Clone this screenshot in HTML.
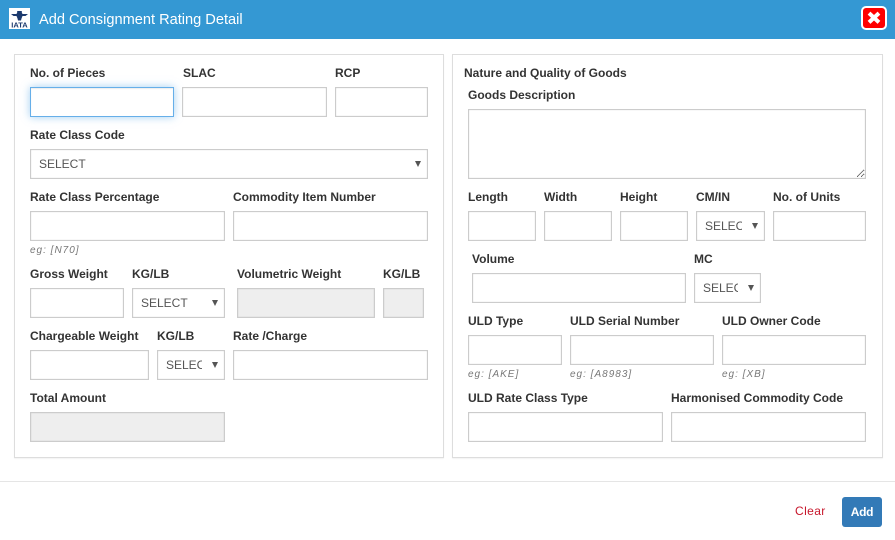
<!DOCTYPE html>
<html><head><meta charset="utf-8"><style>
*{box-sizing:border-box}
html,body{margin:0;padding:0;width:895px;height:540px;overflow:hidden;background:#fff;font-family:"Liberation Sans",sans-serif;font-size:12px;color:#333}
.hd{position:absolute;left:0;top:0;width:895px;height:39px;background:#3498d3}
.title{position:absolute;left:39px;top:10px;font-size:14.6px;line-height:19px;color:#fff;padding-top:1px}
.logo{position:absolute;left:9px;top:8px;width:21px;height:21px;background:#fff}
.x{position:absolute;left:861px;top:6px;width:26px;height:24px;background:#f00;border:2px solid #fff;border-radius:5px}
.panel{position:absolute;top:54px;height:404px;border:1px solid #ddd;background:#fff;box-shadow:0 1px 1px rgba(0,0,0,.05)}
label{position:absolute;font-weight:bold;font-size:12px;line-height:17px;color:#333;white-space:nowrap;margin-top:1px}
input,select,textarea{position:absolute;height:30px;margin:0;border:1px solid #ccc;background:#fff;box-shadow:inset 0 0 1px rgba(0,0,0,.2);font:12px "Liberation Sans",sans-serif;color:#555;padding:6px 8px;border-radius:0;outline:0}
select{appearance:none;-webkit-appearance:none;padding:4px 22px 4px 8px}
b{position:absolute;width:0;height:0;border-left:3.5px solid transparent;border-right:3.5px solid transparent;border-top:6px solid #555}
.dis{background:#eee}
.foc{border-color:#66afe9;box-shadow:inset 0 1px 1px rgba(0,0,0,.075),0 0 8px rgba(102,175,233,.6)}
i{position:absolute;font-size:10px;line-height:14px;color:#777;letter-spacing:1px;white-space:nowrap;margin-top:1px}
.line{position:absolute;left:0;top:481px;width:895px;height:1px;background:#e5e5e5}
.clear{position:absolute;left:795px;top:503px;line-height:17px;color:#c7162b;font-size:12px;letter-spacing:.4px}
.add{position:absolute;left:842px;top:497px;width:40px;height:30px;background:#337ab7;border-radius:3px;color:#fff;font-weight:bold;text-align:center;line-height:30px;font-size:12px;letter-spacing:-.3px}
</style></head><body>
<div class="hd"></div>
<div class="logo"><svg width="21" height="21" viewBox="0 0 21 21"><path d="M2 6h5.500l.7-1.500V3h4.600v1.500l.7 1.500H19l-2.500 2h-3l-1 2.500-.5 2H9l-.5-2-1-2.500h-3z" fill="#1c3a6e"/><text x="10.500" y="19.500" font-family="Liberation Sans" font-size="7.500" font-weight="bold" text-anchor="middle" fill="#1c3a6e">IATA</text></svg></div>
<div class="title">Add Consignment Rating Detail</div>
<div class="x"><svg width="22" height="20" viewBox="0 0 22 20" style="display:block"><path d="M7.500 6.500l7 6.500M14.500 6.500l-7 6.500" stroke="#fff" stroke-width="4" stroke-linecap="square"/></svg></div>

<div class="panel" style="left:14px;width:430px"></div>
<div class="panel" style="left:452px;width:431px"></div>

<label style="left:30px;top:64px">No. of Pieces</label>
<label style="left:183px;top:64px">SLAC</label>
<label style="left:335px;top:64px">RCP</label>
<input class="foc" style="left:30px;top:87px;width:144px">
<input style="left:182px;top:87px;width:145px">
<input style="left:335px;top:87px;width:93px">

<label style="left:30px;top:126px">Rate Class Code</label>
<select style="left:30px;top:149px;width:398px"><option>SELECT</option></select><b style="left:415px;top:161px"></b>

<label style="left:30px;top:188px">Rate Class Percentage</label>
<label style="left:233px;top:188px">Commodity Item Number</label>
<input style="left:30px;top:211px;width:195px">
<input style="left:233px;top:211px;width:195px">
<i style="left:30px;top:243px">eg: [N70]</i>

<label style="left:30px;top:265px">Gross Weight</label>
<label style="left:132px;top:265px">KG/LB</label>
<label style="left:237px;top:265px">Volumetric Weight</label>
<label style="left:383px;top:265px">KG/LB</label>
<input style="left:30px;top:288px;width:94px">
<select style="left:132px;top:288px;width:93px"><option>SELECT</option></select><b style="left:212px;top:300px"></b>
<input class="dis" style="left:237px;top:288px;width:138px">
<input class="dis" style="left:383px;top:288px;width:41px">

<label style="left:30px;top:327px">Chargeable Weight</label>
<label style="left:157px;top:327px">KG/LB</label>
<label style="left:233px;top:327px">Rate /Charge</label>
<input style="left:30px;top:350px;width:119px">
<select style="left:157px;top:350px;width:68px"><option>SELECT</option></select><b style="left:212px;top:362px"></b>
<input style="left:233px;top:350px;width:195px">

<label style="left:30px;top:389px">Total Amount</label>
<input class="dis" style="left:30px;top:412px;width:195px">

<label style="left:464px;top:64px">Nature and Quality of Goods</label>
<label style="left:468px;top:86px">Goods Description</label>
<textarea style="left:468px;top:109px;width:398px;height:70px"></textarea>

<label style="left:468px;top:188px">Length</label>
<label style="left:544px;top:188px">Width</label>
<label style="left:620px;top:188px">Height</label>
<label style="left:696px;top:188px">CM/IN</label>
<label style="left:773px;top:188px">No. of Units</label>
<input style="left:468px;top:211px;width:68px">
<input style="left:544px;top:211px;width:68px">
<input style="left:620px;top:211px;width:68px">
<select style="left:696px;top:211px;width:69px"><option>SELECT</option></select><b style="left:752px;top:223px"></b>
<input style="left:773px;top:211px;width:93px">

<label style="left:472px;top:250px">Volume</label>
<label style="left:694px;top:250px">MC</label>
<input style="left:472px;top:273px;width:214px">
<select style="left:694px;top:273px;width:67px"><option>SELECT</option></select><b style="left:748px;top:285px"></b>

<label style="left:468px;top:312px">ULD Type</label>
<label style="left:570px;top:312px">ULD Serial Number</label>
<label style="left:722px;top:312px">ULD Owner Code</label>
<input style="left:468px;top:335px;width:94px">
<input style="left:570px;top:335px;width:144px">
<input style="left:722px;top:335px;width:144px">
<i style="left:468px;top:367px">eg: [AKE]</i>
<i style="left:570px;top:367px">eg: [A8983]</i>
<i style="left:722px;top:367px">eg: [XB]</i>

<label style="left:468px;top:389px">ULD Rate Class Type</label>
<label style="left:671px;top:389px">Harmonised Commodity Code</label>
<input style="left:468px;top:412px;width:195px">
<input style="left:671px;top:412px;width:195px">

<div class="line"></div>
<div class="clear">Clear</div>
<div class="add">Add</div>
</body></html>
